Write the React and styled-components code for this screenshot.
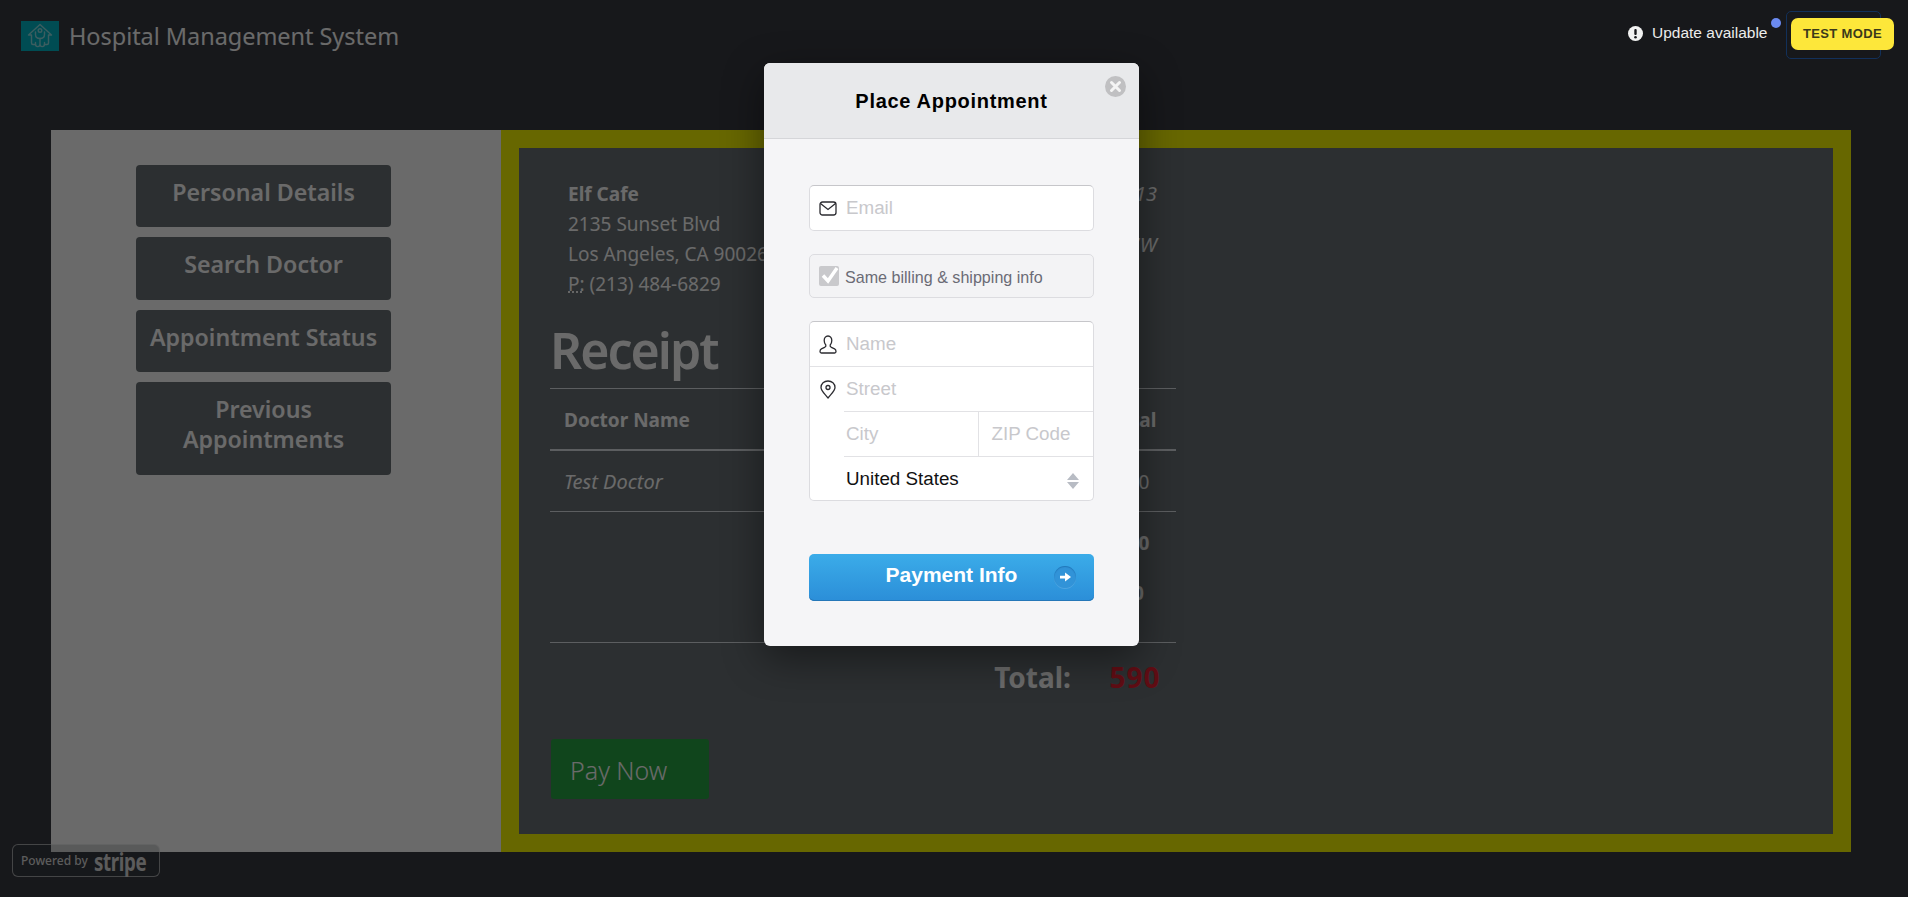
import React from "react";
import styled, { createGlobalStyle } from "styled-components";

const Global = createGlobalStyle`
  html, body { margin: 0; padding: 0; height: 100%; overflow: hidden; }
  body { background: #393b42; font-family: "Noto Sans", sans-serif; color: #fff; }
  * { box-sizing: border-box; }
`;

const Page = styled.div`
  position: relative;
  width: 1908px;
  height: 897px;
  background: #393b42;
  overflow: hidden;
`;
const Header = styled.header`
  height: 130px;
  padding: 21px 0 0 21px;
  display: flex;
  align-items: flex-start;
  gap: 10px;
`;
const LogoBox = styled.div`
  width: 38px;
  height: 30px;
  background: #00b8c8;
  display: flex;
  align-items: center;
  justify-content: center;
  color: #90e0e6;
`;
const Brand = styled.h1`
  margin: -1px 0 0;
  font-size: 23.5px;
  line-height: 32px;
  font-weight: 400;
  letter-spacing: -0.05px;
  color: #fff;
`;
const Main = styled.main`
  width: 1800px;
  height: 722px;
  margin-left: 51px;
  display: flex;
`;
const Sidebar = styled.aside`
  width: 450px;
  background: #fff;
  padding: 35px 0 0 85px;
  display: flex;
  flex-direction: column;
  gap: 10px;
`;
const NavButton = styled.button`
  width: 255px;
  padding: 12px 8px 20.4px;
  border: 0;
  border-radius: 4px;
  background: #6b7276;
  color: #fff;
  font: 600 23.2px/30px "Noto Sans", sans-serif;
  text-align: center;
`;
const ReceiptFrame = styled.section`
  flex: 1;
  border: 18px solid #f8f800;
  background: #6b7276;
  padding: 31px 0 0 31px;
`;
const ReceiptBody = styled.div`
  width: 626px;
`;
const TopGrid = styled.div`
  display: flex;
  justify-content: space-between;
  padding: 0 19px 0 18px;
  font-size: 19px;
  line-height: 30px;
`;
const Address = styled.address`
  font-style: normal;
  strong { font-weight: 700; }
  abbr { text-decoration: underline dotted; }
`;
const Meta = styled.div`
  text-align: right;
  font-style: italic;
  font-size: 20px;
  p { margin: 0 0 21px; }
`;
const Title = styled.h2`
  margin: 18px 0 0;
  height: 71px;
  font-size: 50px;
  line-height: 66px;
  font-weight: 600;
  letter-spacing: -2px;
`;
const Table = styled.table`
  width: 626px;
  table-layout: fixed;
  border-collapse: collapse;
  font-size: 19px;
  line-height: 30px;
`;
const HeadCell = styled.th`
  width: ${(p) => p.$w || "auto"};
  padding: 16px 14px 14px;
  border-top: 1px solid #dee2e6;
  border-bottom: 2px solid #dee2e6;
  text-align: ${(p) => p.$align || "left"};
  font-weight: 700;
`;
const Cell = styled.td`
  padding: 16px 14px 14px;
  border-top: 1px solid #dee2e6;
  text-align: ${(p) => p.$align || "left"};
  font-style: ${(p) => (p.$italic ? "italic" : "normal")};
  font-size: ${(p) => (p.$italic ? "20px" : "inherit")};
  font-weight: ${(p) => (p.$bold ? 700 : 400)};
  p { margin: 0 0 20px; }
`;
const TotalLabel = styled.td`
  padding: 13px 19px 15px 0;
  border-top: 1px solid #dee2e6;
  text-align: right;
  font-size: 28px;
  line-height: 42px;
  font-weight: 700;
`;
const TotalValue = styled.td`
  padding: 13px 0 15px 4px;
  border-top: 1px solid #dee2e6;
  text-align: center;
  font-size: 28px;
  line-height: 42px;
  font-weight: 700;
  letter-spacing: 1px;
  color: #e82030;
`;
const PayButton = styled.button`
  display: block;
  width: 158px;
  height: 60px;
  margin: 26px 0 0 1px;
  padding: 2px 0 0 19px;
  border: 0;
  border-radius: 3px;
  background: #28a745;
  color: #fff;
  text-align: left;
  font: 300 25px "Noto Sans", sans-serif;
`;
const StripeBadge = styled.div`
  position: absolute;
  left: 12px;
  top: 844px;
  width: 148px;
  height: 33px;
  border: 1px solid rgba(255, 255, 255, 0.55);
  border-radius: 6px;
  display: flex;
  align-items: center;
  gap: 6px;
  padding-left: 8px;
  background: rgba(52, 58, 64, 0.2);
  color: #ddd;
  white-space: nowrap;
`;
const StripeLead = styled.span`
  font-size: 12px;
  font-weight: 500;
`;
const StripeWord = styled.b`
  display: inline-block;
  font-size: 25px;
  line-height: 30px;
  font-weight: 700;
  letter-spacing: -0.5px;
  transform: scaleX(0.75);
  transform-origin: left;
`;
const Overlay = styled.div`
  position: absolute;
  inset: 0;
  background: rgba(0, 0, 0, 0.584);
  padding: 63px 5px 0 0;
  display: flex;
  justify-content: center;
  align-items: flex-start;
`;
const Modal = styled.form`
  position: relative;
  width: 375px;
  height: 583px;
  background: #f5f5f7;
  border-radius: 6px;
  box-shadow: 0 12px 40px rgba(0, 0, 0, 0.45);
  font-family: "Liberation Sans", Arial, sans-serif;
`;
const ModalHead = styled.div`
  height: 76px;
  background: #e8e9eb;
  border-radius: 6px 6px 0 0;
  border-bottom: 1px solid #d5d6d9;
  display: flex;
  align-items: center;
  justify-content: center;
  padding-top: 1px;
`;
const ModalTitle = styled.h3`
  margin: 0;
  font-size: 20px;
  font-weight: 700;
  color: #000;
  letter-spacing: 0.7px;
`;
const Close = styled.button`
  position: absolute;
  top: 13px;
  right: 13px;
  width: 21px;
  height: 21px;
  padding: 0;
  border: 0;
  border-radius: 50%;
  background: #c0c0c2;
  display: flex;
  align-items: center;
  justify-content: center;
`;
const ModalBody = styled.div`
  padding: 46px 45px 0;
  display: flex;
  flex-direction: column;
`;
const FieldGroup = styled.div`
  background: #fff;
  border: 1px solid #dcdce0;
  border-top-color: #c6c6ca;
  border-radius: 5px;
  margin-bottom: ${(p) => p.$mb || 0}px;
`;
const Row = styled.div`
  position: relative;
  display: flex;
  height: ${(p) => p.$h || 45}px;
  align-items: center;
  margin-left: ${(p) => (p.$inset ? 34 : 0)}px;
  border-top: ${(p) => (p.$line ? "1px solid #e2e2e5" : "0")};
`;
const IconSlot = styled.span`
  width: 36px;
  flex: none;
  display: flex;
  justify-content: center;
  color: #2b2b30;
`;
const Placeholder = styled.span`
  flex: ${(p) => (p.$grow ? 1 : "none")};
  font-size: 18.8px;
  color: #c8c8cc;
`;
const SplitCell = styled.div`
  width: ${(p) => p.$w}px;
  height: 100%;
  display: flex;
  align-items: center;
  padding-left: ${(p) => p.$pl}px;
  border-right: ${(p) => (p.$divider ? "1px solid #e2e2e5" : "0")};
`;
const CountryValue = styled.span`
  flex: 1;
  font-size: 18.8px;
  color: #111;
  padding-left: 2px;
`;
const SelectArrows = styled.span`
  position: absolute;
  right: 14px;
  top: 15px;
  display: flex;
`;
const CheckRow = styled.label`
  height: 44px;
  background: #f3f3f5;
  border: 1px solid #dcdce0;
  border-radius: 5px;
  display: flex;
  align-items: center;
  gap: 6px;
  padding-left: 9px;
  margin-bottom: 23px;
  color: #6b6b75;
  font-size: 16.1px;
`;
const CheckLabel = styled.span`
  padding-top: 2px;
`;
const CheckBox = styled.span`
  width: 20px;
  height: 20px;
  background: #c9c9cc;
  border-radius: 2px;
  display: flex;
  overflow: visible;
`;
const SubmitButton = styled.button`
  position: relative;
  height: 47px;
  margin-top: 53px;
  border: 0;
  border-radius: 5px;
  background: linear-gradient(#3bace9, #2b8ed8);
  box-shadow: inset 0 -1px 0 #2577b8;
  color: #fff;
  font: 700 21px "Liberation Sans", Arial, sans-serif;
  padding: 0 0 5px;
`;
const ArrowDisc = styled.span`
  position: absolute;
  right: 18px;
  top: 12px;
  width: 22px;
  height: 22px;
  border-radius: 50%;
  background: #3193d8;
  box-shadow: inset 0 1px 1px rgba(0, 70, 130, 0.35), 0 1px 0 rgba(255, 255, 255, 0.15);
  display: flex;
  align-items: center;
  justify-content: center;
`;
const UpdateNotice = styled.div`
  position: absolute;
  left: 1628px;
  top: 24px;
  display: flex;
  align-items: center;
  gap: 9px;
  font: 400 15.5px/18px "Liberation Sans", Arial, sans-serif;
  color: #ececec;
`;
const Dot = styled.span`
  position: absolute;
  left: 1771px;
  top: 18px;
  width: 10px;
  height: 10px;
  border-radius: 50%;
  background: #6b8af0;
`;
const FocusFrame = styled.span`
  position: absolute;
  left: 1786px;
  top: 11px;
  width: 95px;
  height: 48px;
  border: 1px solid #12305a;
  border-radius: 5px;
`;
const TestMode = styled.div`
  position: absolute;
  left: 1791px;
  top: 18px;
  width: 103px;
  height: 32px;
  border-radius: 7px;
  background: #fde73a;
  color: #3b3a1a;
  font: 700 13px/31px "Liberation Sans", Arial, sans-serif;
  text-align: center;
  letter-spacing: 0.35px;
`;

const Logo = () => (
  <svg width="26" height="26" viewBox="0 0 26 26" fill="none" stroke="currentColor" strokeWidth="1.4" strokeLinejoin="round" strokeLinecap="round">
    <path d="M1.5 12 L13 1.5 L24.5 12 H21.5 V20 C21.5 21 21 21.5 20 21.5 H17.5 M4.5 12 V20 C4.5 21 5 21.5 6 21.5 H8.5 M1.5 12 H4.5" />
    <circle cx="13" cy="7.5" r="1.8" />
    <path d="M8.5 9 V11.5 C8.5 14 10.5 15.5 13 15.5 C15.5 15.5 17.5 14 17.5 11.5 V9" />
    <path d="M13 15.5 V21 C13 24.5 8.5 24.5 8.5 21 V19.5 M13 21 C13 24.5 17.5 24.5 17.5 21 V19.5" />
  </svg>
);
const Mail = () => (
  <svg width="18" height="15" viewBox="0 0 18 15" fill="none" stroke="currentColor" strokeWidth="1.3">
    <rect x="1" y="1" width="16" height="13" rx="2.5" />
    <path d="M1.5 2.5 L9 8.5 L16.5 2.5" />
  </svg>
);
const Person = () => (
  <svg width="18" height="19" viewBox="0 0 18 19" fill="none" stroke="currentColor" strokeWidth="1.3" strokeLinejoin="round">
    <path d="M9 1 C6.5 1 5.2 3 5.2 5.4 C5.2 7.6 6 9 6.8 10 C7.2 11 6.8 11.8 5.6 12.4 L2.4 13.8 C1.2 14.4 1 15.3 1 16.5 C1 17.4 1.5 18 2.4 18 H15.6 C16.5 18 17 17.4 17 16.5 C17 15.3 16.8 14.4 15.6 13.8 L12.4 12.4 C11.2 11.8 10.8 11 11.2 10 C12 9 12.8 7.6 12.8 5.4 C12.8 3 11.5 1 9 1 Z" />
  </svg>
);
const Pin = () => (
  <svg width="16" height="19" viewBox="0 0 16 19" fill="none" stroke="currentColor" strokeWidth="1.3">
    <path d="M8 18 C5 14 1 11 1 7.5 C1 3.6 4.1 1 8 1 C11.9 1 15 3.6 15 7.5 C15 11 11 14 8 18 Z" strokeLinejoin="round" />
    <circle cx="8" cy="7.5" r="2" />
  </svg>
);
const Cross = () => (
  <svg width="13" height="13" viewBox="0 0 13 13" stroke="#f4f4f4" strokeWidth="3" strokeLinecap="round">
    <path d="M2.5 2.5 L10.5 10.5 M10.5 2.5 L2.5 10.5" />
  </svg>
);
const Tick = () => (
  <svg width="20" height="20" viewBox="0 0 20 20" fill="none" stroke="#fff" strokeWidth="3.4">
    <path d="M4 9.5 L9 15 L18 2" />
  </svg>
);
const Updown = () => (
  <svg width="12" height="18" viewBox="0 0 12 18" fill="#b8bcc4">
    <path d="M6 1 L12 8 H0 Z M0 10 H12 L6 17 Z" />
  </svg>
);
const ArrowRight = () => (
  <svg width="11" height="10" viewBox="0 0 12 10" fill="#fff">
    <path d="M0 3.5 H5.5 V0 L12 5 L5.5 10 V6.5 H0 Z" />
  </svg>
);
const Alert = () => (
  <svg width="15" height="15" viewBox="0 0 15 15">
    <circle cx="7.5" cy="7.5" r="7.5" fill="#f2f2f2" />
    <rect x="6.3" y="3" width="2.4" height="6" rx="1" fill="#17181c" />
    <circle cx="7.5" cy="11.2" r="1.3" fill="#17181c" />
  </svg>
);

export default function App() {
  return (
    <Page>
      <Global />
      <Header>
        <LogoBox><Logo /></LogoBox>
        <Brand>Hospital Management System</Brand>
      </Header>
      <Main>
        <Sidebar>
          <NavButton>Personal Details</NavButton>
          <NavButton>Search Doctor</NavButton>
          <NavButton>Appointment Status</NavButton>
          <NavButton>Previous Appointments</NavButton>
        </Sidebar>
        <ReceiptFrame>
          <ReceiptBody>
            <TopGrid>
              <Address>
                <strong>Elf Cafe</strong><br />
                2135 Sunset Blvd<br />
                Los Angeles, CA 90026<br />
                <abbr title="Phone">P:</abbr> (213) 484-6829
              </Address>
              <Meta>
                <p>Date: 1st November, 2013</p>
                <p>Receipt #: 34522677W</p>
              </Meta>
            </TopGrid>
            <Title>Receipt</Title>
            <Table>
              <thead>
                <tr>
                  <HeadCell>Doctor Name</HeadCell>
                  <HeadCell $w="90px">#</HeadCell>
                  <HeadCell $w="120px" $align="center">Price</HeadCell>
                  <HeadCell $w="86px" $align="center">Total</HeadCell>
                </tr>
              </thead>
              <tbody>
                <tr>
                  <Cell $italic>Test Doctor</Cell>
                  <Cell>1</Cell>
                  <Cell $align="center">$90</Cell>
                  <Cell $align="center">$90</Cell>
                </tr>
                <tr>
                  <Cell />
                  <Cell />
                  <Cell $align="right" $bold><p>Subtotal:</p><p>Tax:</p></Cell>
                  <Cell $align="center"><p><b>$90</b></p><p><b>$0</b></p></Cell>
                </tr>
                <tr>
                  <Cell />
                  <Cell />
                  <TotalLabel>Total:</TotalLabel>
                  <TotalValue>590</TotalValue>
                </tr>
              </tbody>
            </Table>
            <PayButton>Pay Now</PayButton>
          </ReceiptBody>
        </ReceiptFrame>
      </Main>
      <StripeBadge>
        <StripeLead>Powered by</StripeLead>
        <StripeWord>stripe</StripeWord>
      </StripeBadge>
      <Overlay>
        <Modal>
          <ModalHead>
            <ModalTitle>Place Appointment</ModalTitle>
          </ModalHead>
          <Close type="button"><Cross /></Close>
          <ModalBody>
            <FieldGroup $mb={23}>
              <Row $h={44}>
                <IconSlot><Mail /></IconSlot>
                <Placeholder $grow>Email</Placeholder>
              </Row>
            </FieldGroup>
            <CheckRow>
              <CheckBox><Tick /></CheckBox>
              <CheckLabel>Same billing &amp; shipping info</CheckLabel>
            </CheckRow>
            <FieldGroup>
              <Row $h={44}>
                <IconSlot><Person /></IconSlot>
                <Placeholder $grow>Name</Placeholder>
              </Row>
              <Row $line>
                <IconSlot><Pin /></IconSlot>
                <Placeholder $grow>Street</Placeholder>
              </Row>
              <Row $line $inset>
                <SplitCell $w={136} $divider $pl={2}><Placeholder>City</Placeholder></SplitCell>
                <SplitCell $w={114} $pl={12}><Placeholder>ZIP Code</Placeholder></SplitCell>
              </Row>
              <Row $line $inset $h={44}>
                <CountryValue>United States</CountryValue>
                <SelectArrows><Updown /></SelectArrows>
              </Row>
            </FieldGroup>
            <SubmitButton type="button">
              Payment Info
              <ArrowDisc><ArrowRight /></ArrowDisc>
            </SubmitButton>
          </ModalBody>
        </Modal>
      </Overlay>
      <UpdateNotice><Alert />Update available</UpdateNotice>
      <Dot />
      <FocusFrame />
      <TestMode>TEST MODE</TestMode>
    </Page>
  );
}
